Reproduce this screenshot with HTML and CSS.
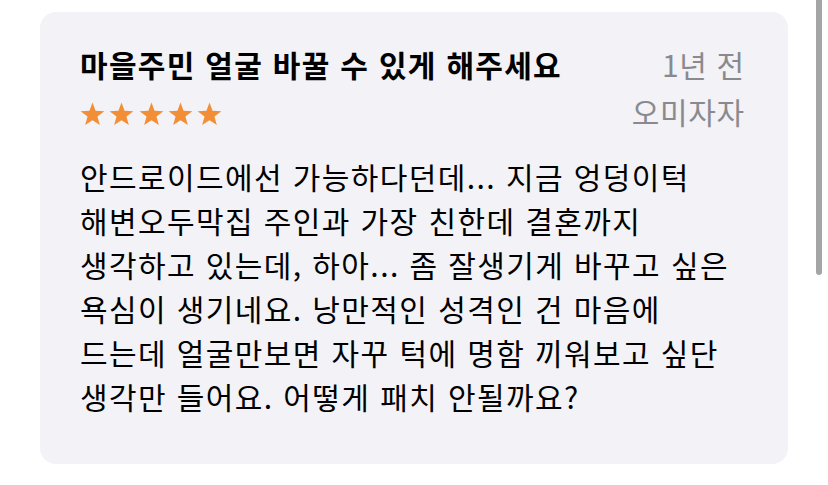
FILE: index.html
```html
<!DOCTYPE html>
<html lang="ko">
<head>
<meta charset="utf-8">
<link rel="stylesheet" href="styles.css">
</head>
<body>
<div class="page">
  <article class="card">
    <header class="head">
      <div class="head-left">
        <h2 class="title">마을주민 얼굴 바꿀 수 있게 해주세요</h2>
        <div class="stars">
          <svg viewBox="0 0 25 24" class="star"><polygon points="12.5,0.5 15.56,8.79 24.39,9.14 17.45,14.61 19.85,23.11 12.5,18.2 5.15,23.11 7.55,14.61 0.61,9.14 9.44,8.79"/></svg>
          <svg viewBox="0 0 25 24" class="star"><polygon points="12.5,0.5 15.56,8.79 24.39,9.14 17.45,14.61 19.85,23.11 12.5,18.2 5.15,23.11 7.55,14.61 0.61,9.14 9.44,8.79"/></svg>
          <svg viewBox="0 0 25 24" class="star"><polygon points="12.5,0.5 15.56,8.79 24.39,9.14 17.45,14.61 19.85,23.11 12.5,18.2 5.15,23.11 7.55,14.61 0.61,9.14 9.44,8.79"/></svg>
          <svg viewBox="0 0 25 24" class="star"><polygon points="12.5,0.5 15.56,8.79 24.39,9.14 17.45,14.61 19.85,23.11 12.5,18.2 5.15,23.11 7.55,14.61 0.61,9.14 9.44,8.79"/></svg>
          <svg viewBox="0 0 25 24" class="star"><polygon points="12.5,0.5 15.56,8.79 24.39,9.14 17.45,14.61 19.85,23.11 12.5,18.2 5.15,23.11 7.55,14.61 0.61,9.14 9.44,8.79"/></svg>
        </div>
      </div>
      <div class="head-right">
        <div class="meta">1년 전</div>
        <div class="meta meta-author">오미자자</div>
      </div>
    </header>
    <p class="body">안드로이드에선 가능하다던데... 지금 엉덩이턱<br>해변오두막집 주인과 가장 친한데 결혼까지<br>생각하고 있는데, 하아... 좀 잘생기게 바꾸고 싶은<br>욕심이 생기네요. 낭만적인 성격인 건 마음에<br>드는데 얼굴만보면 자꾸 턱에 명함 끼워보고 싶단<br>생각만 들어요. 어떻게 패치 안될까요?</p>
  </article>
  <div class="scrollbar"></div>
</div>
</body>
</html>
```

FILE: styles.css
```css
html, body {
  margin: 0;
  padding: 0;
  background: #ffffff;
}
.page {
  position: relative;
  width: 828px;
  height: 485px;
  padding: 12px 40px 0 40px;
  box-sizing: border-box;
  font-family: "Noto Sans CJK KR", "Noto Sans", sans-serif;
  color: #000;
}
.card {
  width: 748px;
  height: 452px;
  box-sizing: border-box;
  background: #f2f2f7;
  border-radius: 16px;
  padding: 32px 44px 0 40px;
}
.head {
  display: flex;
  justify-content: space-between;
  align-items: flex-start;
}
.head-left {
  display: flex;
  flex-direction: column;
}
.title {
  margin: 0;
  font-size: 30px;
  font-weight: 700;
  line-height: 40px;
  letter-spacing: 1.3px;
}
.stars {
  display: flex;
  gap: 4.3px;
  margin-top: 18px;
}
.star {
  width: 25px;
  height: 24px;
  fill: #f28e35;
}
.head-right {
  display: flex;
  flex-direction: column;
  align-items: flex-end;
}
.meta {
  font-size: 30px;
  line-height: 40px;
  color: #8a8a8e;
  letter-spacing: 0.6px;
  margin-right: -0.6px;
}
.meta-author {
  margin-top: 7px;
}
.body {
  margin: 23px 0 0 0;
  font-size: 30px;
  line-height: 44px;
  letter-spacing: 1.4px;
}
.scrollbar {
  position: absolute;
  top: 0;
  right: 6px;
  width: 6px;
  height: 275px;
  background: #a5a5a5;
  border-radius: 0 0 3px 3px;
}
```
